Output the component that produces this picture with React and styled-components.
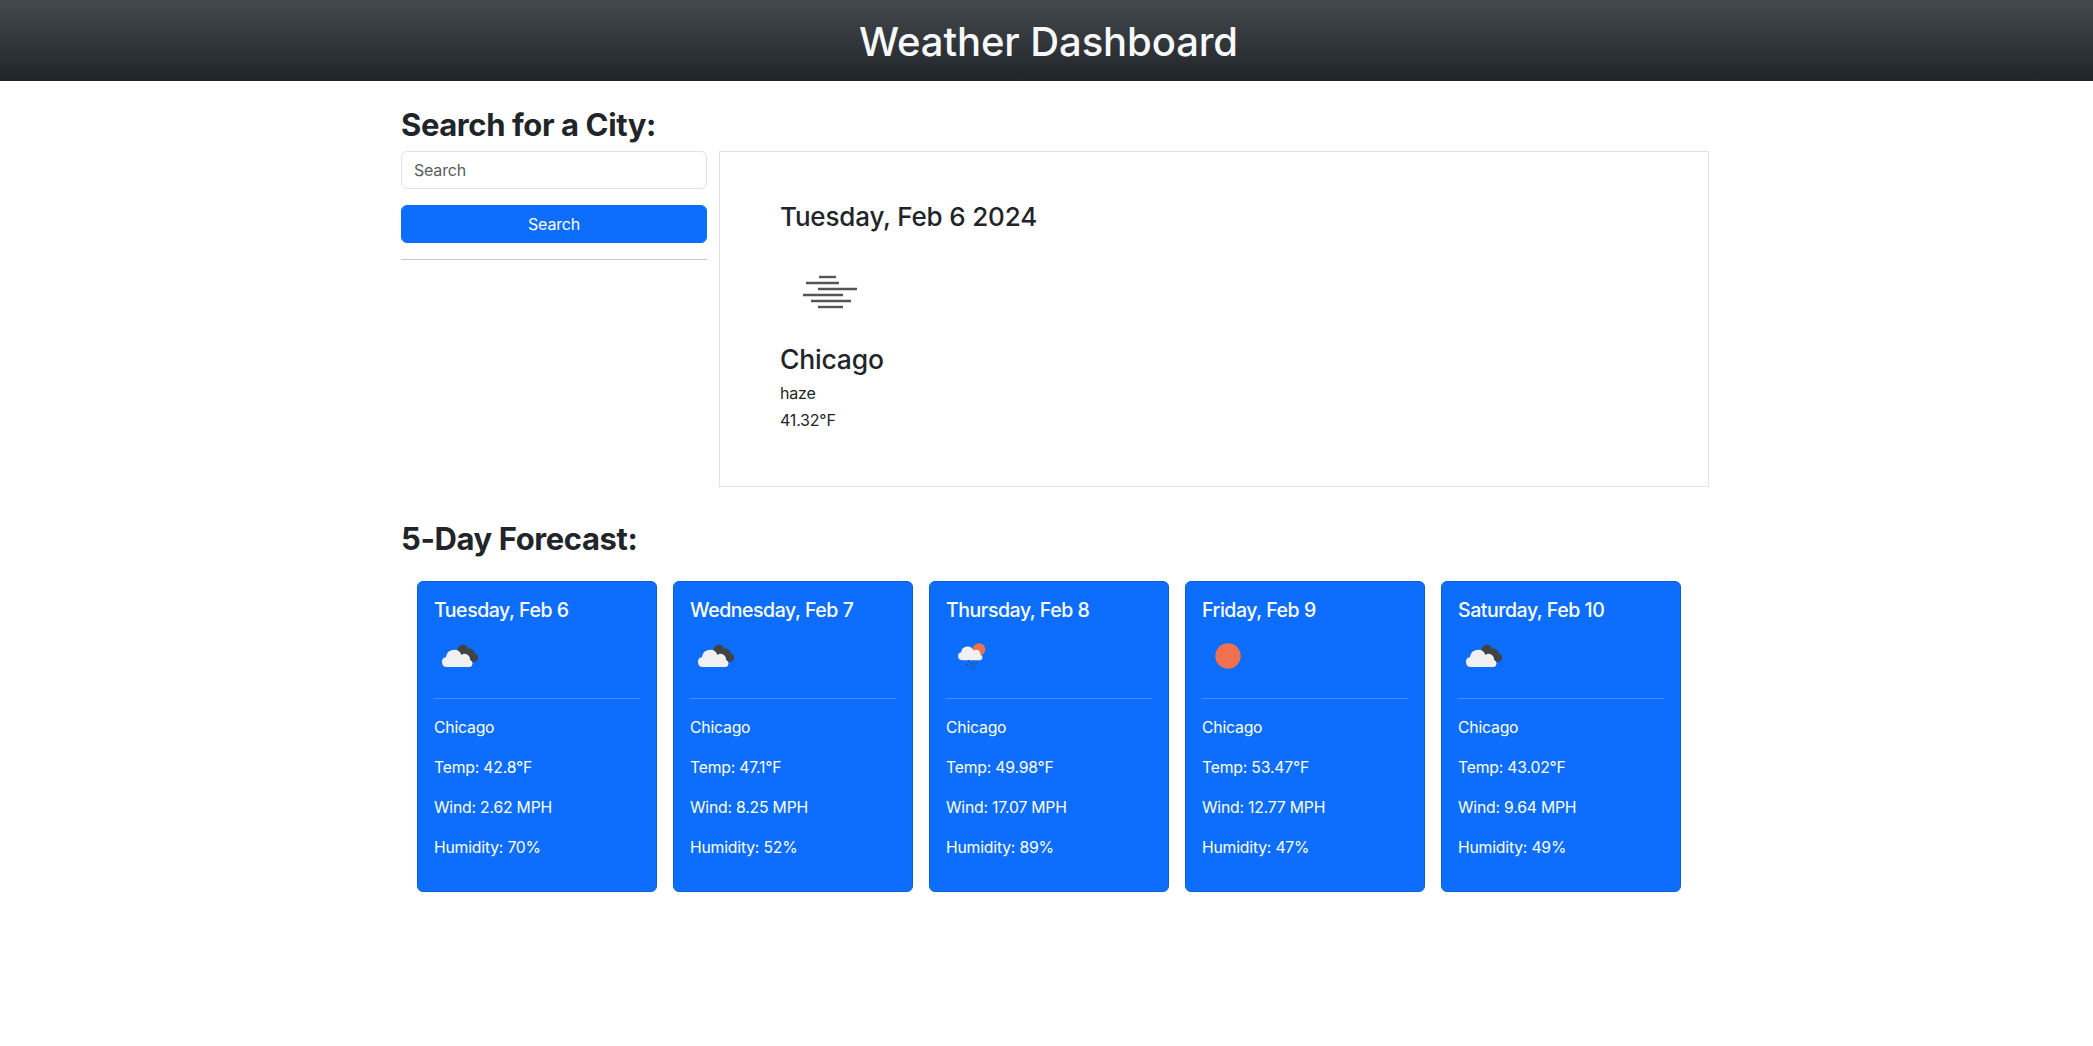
import React from 'react';
import styled, { createGlobalStyle } from 'styled-components';

const GlobalStyle = createGlobalStyle`
  * {
    box-sizing: border-box;
  }

  body {
    margin: 0;
    background: #fff;
    color: #212529;
    font-family: Inter, "Noto Sans", sans-serif;
    font-size: 16px;
    line-height: 1.5;
    letter-spacing: -0.2px;
  }
`;

const Header = styled.header`
  height: 81px;
  display: flex;
  align-items: center;
  justify-content: center;
  padding: 2px 0 0 4px;
  background: linear-gradient(180deg, #44494d 0%, #212529 100%);
`;

const PageTitle = styled.h1`
  margin: 0;
  color: #f8f9fa;
  font-size: 40px;
  font-weight: 550;
  line-height: 48px;
  letter-spacing: -0.1px;
`;

const Main = styled.main`
  padding: 25px 384px 0 401px;
`;

const SectionTitle = styled.h2`
  margin: 0 0 7px;
  font-size: 31px;
  font-weight: 700;
  line-height: 38px;
  letter-spacing: -0.4px;
`;

const TopRow = styled.div`
  display: flex;
  gap: 12px;
  margin-bottom: 33px;
`;

const Sidebar = styled.aside`
  width: 306px;
  flex: none;
`;

const SearchInput = styled.input`
  display: block;
  width: 100%;
  height: 38px;
  padding: 6px 12px;
  border: 1px solid #dee2e6;
  border-radius: 6px;
  font: inherit;
  letter-spacing: inherit;

  &::placeholder {
    color: #595c5f;
    opacity: 1;
  }
`;

const SearchButton = styled.button`
  display: block;
  width: 100%;
  height: 38px;
  margin-top: 16px;
  border: 1px solid #0d6efd;
  border-radius: 6px;
  background: #0d6efd;
  color: #fff;
  font: inherit;
  letter-spacing: inherit;
`;

const Rule = styled.hr`
  margin: ${(props) => props.$top}px 0 17px;
  border: 0;
  border-top: 1px solid ${(props) => props.$color};
`;

const CurrentPanel = styled.section`
  width: 990px;
  height: 336px;
  padding: 48px 60px;
  border: 1px solid #dee2e6;
`;

const DateHeading = styled.h3`
  margin: 0 0 8px;
  font-size: 26px;
  font-weight: 500;
  line-height: 34px;
  letter-spacing: -0.17px;
`;

const CityHeading = styled.h3`
  margin: 0 0 5px;
  font-size: 26.5px;
  font-weight: 500;
  line-height: 34px;
  letter-spacing: -0.2px;
`;

const CurrentLine = styled.p`
  margin: 0 0 3px;
  font-size: 16px;
  line-height: 24px;
`;

const ForecastRow = styled.div`
  display: flex;
  gap: 16px;
  margin-top: 23px;
  padding-left: 16px;
`;

const Card = styled.article`
  width: 240px;
  height: 311px;
  padding: 16px;
  border: 1px solid #0b5ed7;
  border-radius: 6px;
  background: #0d6efd;
  color: #fff;
`;

const CardTitle = styled.h5`
  margin: 0 0 8px;
  font-size: 19.5px;
  font-weight: 500;
  line-height: 24px;
  letter-spacing: -0.45px;
`;

const CardLine = styled.p`
  margin: 0 0 16px;
  font-size: 15.75px;
  line-height: 24px;
`;

const IconBox = styled.svg`
  display: block;
  width: ${(props) => props.$size}px;
  height: ${(props) => props.$size}px;
`;

const CloudShape = () => (
  <path
    fill="#f1f1f1"
    d="M13 37a5 5 0 0 1-1-9.9 8 8 0 0 1 15.4-2.2 5.5 5.5 0 0 1 8.6 5.2A3.6 3.6 0 0 1 36 37Z"
  />
);

const HazeIcon = () => (
  <IconBox $size={100} viewBox="0 0 100 100">
    <g stroke="#555" strokeWidth="2.4">
      <path d="M39 35h17" />
      <path d="M26 41h33" />
      <path d="M38 47h39" />
      <path d="M23 53h40" />
      <path d="M31 59h40" />
      <path d="M38 65h25" />
    </g>
  </IconBox>
);

const CloudsIcon = () => (
  <IconBox $size={50} viewBox="0 0 50 50">
    <g fill="#444">
      <circle cx="29" cy="20" r="5.4" />
      <circle cx="35.5" cy="23.5" r="5" />
      <circle cx="40" cy="27.5" r="4.2" />
    </g>
    <CloudShape />
  </IconBox>
);

const RainSunIcon = () => (
  <IconBox $size={50} viewBox="0 0 50 50">
    <circle cx="33" cy="19.5" r="6.3" fill="#f0714d" />
    <g transform="translate(5.6 0.6) scale(0.8)">
      <CloudShape />
    </g>
    <g stroke="#444" strokeWidth="1.1">
      <path d="M22.8 30v1.8" />
      <path d="M21.2 34l-.3 2" />
      <path d="M26.2 33l-.3 2" />
      <path d="M30.4 32.4l-.2 1.4" />
      <path d="M24.4 36.8v1.2" />
      <path d="M28.8 36.6l-.3 1.5" />
    </g>
  </IconBox>
);

const SunIcon = () => (
  <IconBox $size={50} viewBox="0 0 50 50">
    <circle cx="26" cy="26" r="12.7" fill="#f0714d" />
  </IconBox>
);

const forecast = [
  { date: 'Tuesday, Feb 6', Icon: CloudsIcon, temp: '42.8', wind: '2.62', humidity: 70 },
  { date: 'Wednesday, Feb 7', Icon: CloudsIcon, temp: '47.1', wind: '8.25', humidity: 52 },
  { date: 'Thursday, Feb 8', Icon: RainSunIcon, temp: '49.98', wind: '17.07', humidity: 89 },
  { date: 'Friday, Feb 9', Icon: SunIcon, temp: '53.47', wind: '12.77', humidity: 47 },
  { date: 'Saturday, Feb 10', Icon: CloudsIcon, temp: '43.02', wind: '9.64', humidity: 49 },
];

const App = () => (
  <>
    <GlobalStyle />
    <Header>
      <PageTitle>Weather Dashboard</PageTitle>
    </Header>

    <Main>
      <SectionTitle>Search for a City:</SectionTitle>
      <TopRow>
        <Sidebar>
          <SearchInput placeholder="Search" />
          <SearchButton>Search</SearchButton>
          <Rule $top={16} $color="#c8c8c8" />
        </Sidebar>

        <CurrentPanel>
          <DateHeading>Tuesday, Feb 6 2024</DateHeading>
          <HazeIcon />
          <CityHeading>Chicago</CityHeading>
          <CurrentLine>haze</CurrentLine>
          <CurrentLine>41.32°F</CurrentLine>
        </CurrentPanel>
      </TopRow>

      <SectionTitle>5-Day Forecast:</SectionTitle>
      <ForecastRow>
        {forecast.map(({ date, Icon, temp, wind, humidity }) => (
          <Card key={date}>
            <CardTitle>{date}</CardTitle>
            <Icon />
            <Rule $top={18} $color="#4a8ffd" />
            <CardLine>Chicago</CardLine>
            <CardLine>Temp: {temp}°F</CardLine>
            <CardLine>Wind: {wind} MPH</CardLine>
            <CardLine>Humidity: {humidity}%</CardLine>
          </Card>
        ))}
      </ForecastRow>
    </Main>
  </>
);

export default App;
